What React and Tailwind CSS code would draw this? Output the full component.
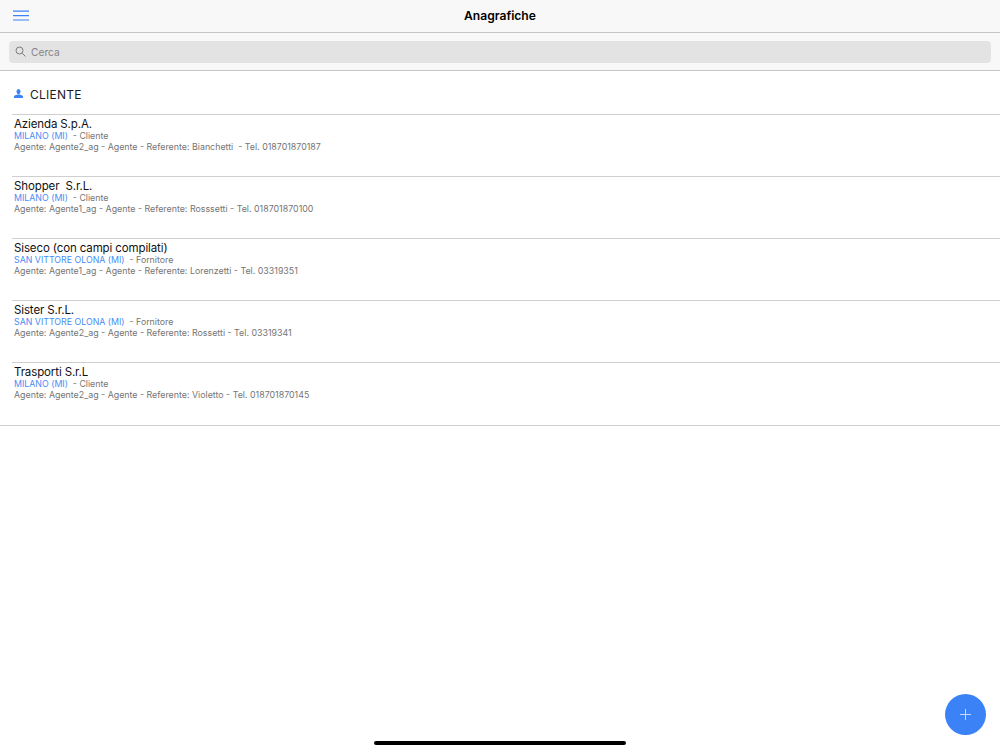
import React from "react";

const rows = [
  { name: "Azienda S.p.A.", city: "MILANO (MI)", kind: "Cliente", info: "Agente: Agente2_ag - Agente - Referente: Bianchetti  - Tel. 018701870187" },
  { name: "Shopper  S.r.L.", city: "MILANO (MI)", kind: "Cliente", info: "Agente: Agente1_ag - Agente - Referente: Rosssetti - Tel. 018701870100" },
  { name: "Siseco (con campi compilati)", city: "SAN VITTORE OLONA (MI)", kind: "Fornitore", info: "Agente: Agente1_ag - Agente - Referente: Lorenzetti - Tel. 03319351" },
  { name: "Sister S.r.L.", city: "SAN VITTORE OLONA (MI)", kind: "Fornitore", info: "Agente: Agente2_ag - Agente - Referente: Rossetti - Tel. 03319341" },
  { name: "Trasporti S.r.L", city: "MILANO (MI)", kind: "Cliente", info: "Agente: Agente2_ag - Agente - Referente: Violetto - Tel. 018701870145" },
];

const App = () => {
  return (
    <div className="relative h-[750px] w-[1000px] overflow-hidden bg-white font-['Inter',sans-serif] text-black">
      {/* top bar */}
      <div className="relative flex h-[33px] items-center justify-center border-b border-[#c4c4c4] bg-[#f8f8f8]">
        <svg className="absolute left-[13px] top-[10px]" width="16" height="11" viewBox="0 0 16 11" stroke="#3b82f6" strokeWidth="1.2">
          <path d="M0 1.2h16M0 5.6h16M0 10h16" />
        </svg>
        <h1 className="text-[12.1px] font-semibold">Anagrafiche</h1>
      </div>

      {/* search */}
      <div className="flex h-[38px] items-center border-b border-[#c4c4c4] bg-[#f8f8f8] px-[9px] pt-px">
        <div className="flex h-[22px] w-full items-center gap-[5px] rounded-[4px] bg-[#e3e3e4] px-[6px]">
          <svg className="mb-px" width="11" height="11" viewBox="0 0 11 11" fill="none" stroke="#7c7c7f" strokeWidth="1">
            <circle cx="4.5" cy="4.5" r="3.5" />
            <path d="M7.2 7.2 10.5 10.5" />
          </svg>
          <span className="pt-px text-[10.2px] text-[#85858a]">Cerca</span>
        </div>
      </div>

      {/* section */}
      <div className="flex h-[43px] items-center pl-[14px] pt-[5px]">
        <svg className="mb-[3px]" width="9" height="9" viewBox="0 0 9 9" fill="#3b82f6">
          <ellipse cx="4.5" cy="2.6" rx="2" ry="2.6" />
          <path d="M0 9V7.6c0-1 2-1.4 3.2-2h2.6C7 6.2 9 6.6 9 7.6V9z" />
        </svg>
        <span className="ml-[7px] text-[12px] tracking-[0.25px] text-[#1c1c1c]">CLIENTE</span>
      </div>

      {/* list */}
      <div className="pl-3">
        {rows.map((r, i) => (
          <div key={r.name} className={(i === rows.length - 1 ? "h-[63px]" : "h-[62px]") + " border-t border-[#cfcfcf] pl-[2px] pt-[2px]"}>
            <div className="whitespace-pre text-[11.5px] leading-[14px] tracking-[-0.12px] text-[#111]">{r.name}</div>
            <div className="whitespace-pre text-[8.8px] leading-[9px] text-[#757575]">
              <span className="text-[#4a8bf5]">{r.city}</span>{"  - " + r.kind}
            </div>
            <div className="whitespace-pre text-[8.85px] leading-[14px] text-[#757575]">{r.info}</div>
          </div>
        ))}
      </div>
      <div className="h-px bg-[#cfcfcf]"></div>

      {/* add button */}
      <button className="absolute bottom-[15px] right-[14px] flex h-[41px] w-[41px] items-center justify-center rounded-full bg-[#3b82f6]">
        <svg width="11" height="11" viewBox="0 0 11 11" stroke="#c4d9fb" strokeWidth="1">
          <path d="M5.5 0v11M0 5.5h11" />
        </svg>
      </button>

      {/* home indicator */}
      <div className="absolute bottom-[5px] left-[374px] h-[4px] w-[252px] rounded-full bg-black"></div>
    </div>
  );
};

export default App;
